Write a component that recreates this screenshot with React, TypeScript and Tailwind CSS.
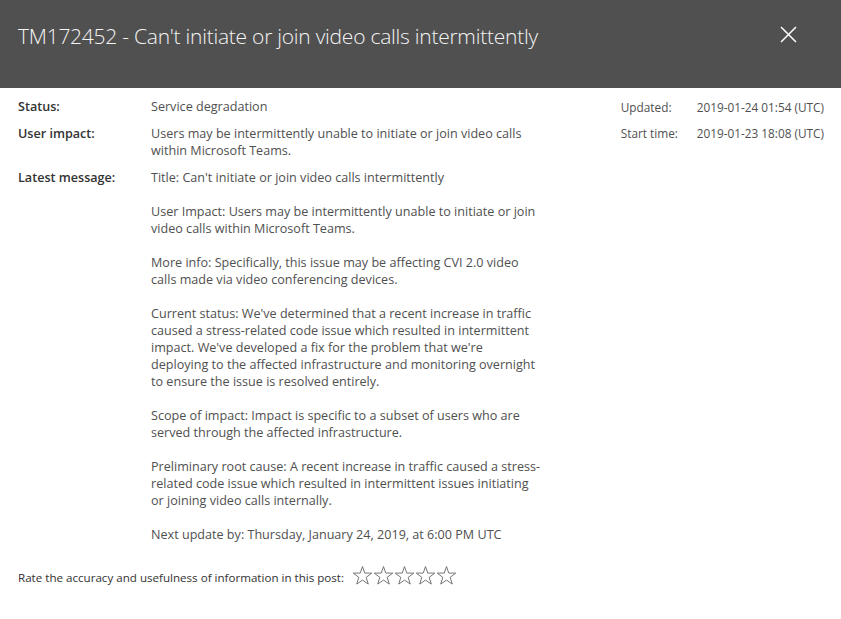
import React from "react";

const font = { fontFamily: '"Segoe UI", "Open Sans", "Liberation Sans", sans-serif' };

const paragraphs = [
  "Title: Can't initiate or join video calls intermittently",
  "User Impact: Users may be intermittently unable to initiate or join video calls within Microsoft Teams.",
  "More info: Specifically, this issue may be affecting CVI 2.0 video calls made via video conferencing devices.",
  "Current status: We've determined that a recent increase in traffic caused a stress-related code issue which resulted in intermittent impact. We've developed a fix for the problem that we're deploying to the affected infrastructure and monitoring overnight to ensure the issue is resolved entirely.",
  "Scope of impact: Impact is specific to a subset of users who are served through the affected infrastructure.",
  "Preliminary root cause: A recent increase in traffic caused a stress-related code issue which resulted in intermittent issues initiating or joining video calls internally.",
  "Next update by: Thursday, January 24, 2019, at 6:00 PM UTC",
];

function Star() {
  return (
    <svg width="21" height="21" viewBox="0 0 24 24" fill="none" stroke="#707070" strokeWidth="1.1" strokeLinejoin="miter">
      <path d="M12 1.8 L14.6 9.2 L22.6 9.3 L16.2 14.1 L18.6 21.8 L12 17.2 L5.4 21.8 L7.8 14.1 L1.4 9.3 L9.4 9.2 Z" />
    </svg>
  );
}

export default function App() {
  return (
    <div className="w-[841px] h-[619px] bg-white overflow-hidden" style={font}>
      {/* header bar */}
      <div className="h-[88px] bg-[#505050] flex items-start justify-between pl-[18px] pr-[44px] pt-[20px]">
        <h1 className="text-[21px] leading-[32px] font-light text-[#f4f4f4] tracking-[-0.25px]">
          TM172452 - Can't initiate or join video calls intermittently
        </h1>
        <svg width="17" height="17" viewBox="0 0 17 17" className="mt-[6px]" stroke="#ffffff" strokeWidth="1.5">
          <path d="M1 1 L16 16 M16 1 L1 16" />
        </svg>
      </div>

      <div className="flex justify-between pl-[18px] pr-[17px] pt-[10px]">
        <div className="flex flex-col gap-[10px] text-[12.6px] leading-[17px]">
          <div className="flex">
            <div className="w-[133px] font-semibold text-[#333333]">Status:</div>
            <div className="text-[#505050]">Service degradation</div>
          </div>
          <div className="flex">
            <div className="w-[133px] font-semibold text-[#333333]">User impact:</div>
            <div className="w-[390px] text-[#505050]">
              Users may be intermittently unable to initiate or join video calls within Microsoft Teams.
            </div>
          </div>
          <div className="flex">
            <div className="w-[133px] font-semibold text-[#333333]">Latest message:</div>
            <div className="w-[392px] flex flex-col gap-[17px] text-[#505050]">
              {paragraphs.map((p) => (
                <p key={p}>{p}</p>
              ))}
            </div>
          </div>
        </div>

        <div className="flex flex-col gap-[9px] text-[11.8px] leading-[17px] text-[#505050] pt-[1px]">
          <div className="flex">
            <div className="w-[76px]">Updated:</div>
            <div>2019-01-24 01:54 (UTC)</div>
          </div>
          <div className="flex">
            <div className="w-[76px]">Start time:</div>
            <div>2019-01-23 18:08 (UTC)</div>
          </div>
        </div>
      </div>

      {/* rating */}
      <div className="flex items-end px-[18px] pt-[22px]">
        <span className="text-[11.6px] leading-[17px] text-[#333333]">
          Rate the accuracy and usefulness of information in this post:
        </span>
        <div className="flex ml-[8px]">
          <Star />
          <Star />
          <Star />
          <Star />
          <Star />
        </div>
      </div>
    </div>
  );
}
